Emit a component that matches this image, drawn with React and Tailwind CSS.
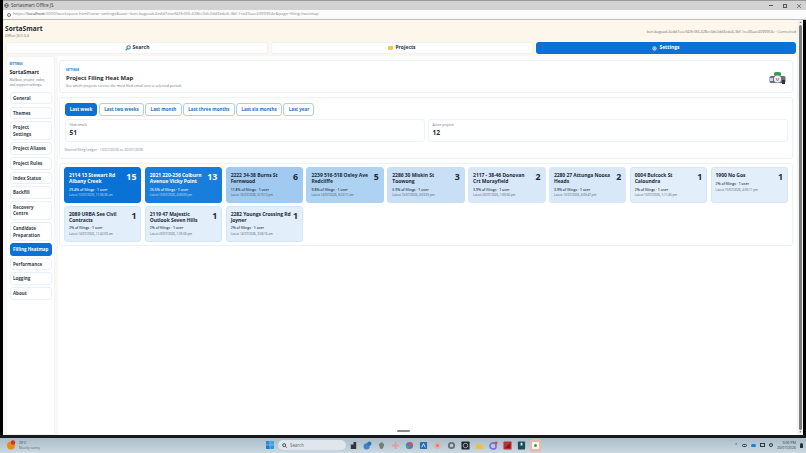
import React from "react";

const hi = "bg-[#0a72d4] text-white border-[#0a72d4]";
const low = "bg-[#e2eefa] text-[#1d2a38] border-[#d5e6f7]";
const cards = [
  ["2114 13 Stewart Rd\nAlbany Creek", 15, "29.4%", "15/07/2026, 11:36:36 am", hi],
  ["2021 220-236 Colburn\nAvenue Vicky Point", 13, "25.5%", "15/07/2026, 4:00:00 pm", "bg-[#197edb] text-white border-[#197edb]"],
  ["2222 34-38 Burns St\nFernwood", 6, "11.8%", "16/07/2026, 6:19:12 pm", "bg-[#a0caf0] text-[#1d2a38] border-[#a0caf0]"],
  ["2239 516-518 Oxley Ave\nRedcliffe", 5, "9.8%", "14/07/2026, 8:22:11 am", "bg-[#aed2f2] text-[#1d2a38] border-[#aed2f2]"],
  ["2286 30 Miskin St\nToowong", 3, "5.9%", "15/07/2026, 4:53:55 pm", "bg-[#c8dff5] text-[#1d2a38] border-[#c8dff5]"],
  ["2117 - 38-46 Donovan\nCrt Morayfield", 2, "3.9%", "20/07/2026, 1:00:06 pm", "bg-[#d8e8f8] text-[#1d2a38] border-[#d8e8f8]"],
  ["2280 27 Attunga Noosa\nHeads", 2, "3.9%", "15/07/2026, 4:05:47 pm", "bg-[#d8e8f8] text-[#1d2a38] border-[#d8e8f8]"],
  ["0004 Bulcock St\nCaloundra", 1, "2%", "15/07/2026, 1:11:45 pm", low],
  ["1900 No Gos", 1, "2%", "15/07/2026, 4:05:11 pm", low],
  ["2089 URBA See Civil\nContracts", 1, "2%", "14/07/2026, 11:42:59 am", low],
  ["2119 47 Majestic\nOutlook Seven Hills", 1, "2%", "20/07/2026, 1:35:06 pm", low],
  ["2282 Youngs Crossing Rd\nJoyner", 1, "2%", "14/07/2026, 9:34:16 am", low],
];

const nav = [
  "General",
  "Themes",
  "Project\nSettings",
  "Project Aliases",
  "Project Rules",
  "Index Status",
  "Backfill",
  "Recovery\nCentre",
  "Candidate\nPreparation",
  "Filling Heatmap",
  "Performance",
  "Logging",
  "About",
];

const ranges = ["Last week", "Last two weeks", "Last month", "Last three months", "Last six months", "Last year"];

function Mascot() {
  return (
    <svg width="17" height="14" viewBox="0 0 17 14">
      <rect x="0.5" y="5" width="16" height="7" rx="1.5" fill="#66747f" />
      <rect x="5" y="1" width="7" height="4" rx="1.5" fill="#3f9a5a" />
      <circle cx="8.5" cy="8" r="3.6" fill="#eef1f4" />
      <path d="M7 7l1.5 3L10 7" stroke="#c2455a" strokeWidth="0.8" fill="none" />
      <rect x="1" y="7" width="3" height="3" fill="#cfd8e0" />
      <rect x="13" y="9" width="3" height="4" fill="#2c3640" />
    </svg>
  );
}

function Tray({ children }) {
  return (
    <svg width="9" height="9" viewBox="0 0 10 10" className="shrink-0">
      {children}
    </svg>
  );
}

function Taskbar() {
  return (
    <div className="h-[15.5px] shrink-0 flex items-center bg-gradient-to-b from-[#a9bcc8] to-[#cbd9e1] text-[#2c3a44]">
      <div className="w-[258px] flex items-center pl-[6px] shrink-0">
        <svg width="10" height="10" viewBox="0 0 10 10">
          <circle cx="5" cy="5.5" r="4" fill="#ea8a1e" />
          <circle cx="7" cy="2.5" r="2.2" fill="#c8372c" />
        </svg>
        <div className="ml-[3px] leading-[5px]">
          <div className="text-[3.4px]">20°C</div>
          <div className="text-[3.4px] text-[#5a6a75]">Mostly sunny</div>
        </div>
      </div>
      <svg width="8" height="8" viewBox="0 0 8 8" className="ml-[8px] shrink-0">
        <rect width="3.7" height="3.7" fill="#1f8fe0" />
        <rect x="4.3" width="3.7" height="3.7" fill="#3aa5ec" />
        <rect y="4.3" width="3.7" height="3.7" fill="#1a7cd0" />
        <rect x="4.3" y="4.3" width="3.7" height="3.7" fill="#2c95e2" />
      </svg>
      <div className="ml-[4px] w-[68px] h-[10px] rounded-full bg-[#dfe7ec] flex items-center pl-[4px] gap-[3px] shrink-0">
        <svg width="5" height="5" viewBox="0 0 10 10" fill="none" stroke="#26323a" strokeWidth="1.6">
          <circle cx="4.2" cy="4.2" r="3" />
          <path d="M6.6 6.6L9.4 9.4" />
        </svg>
        <span className="text-[4.4px] text-[#59666f]">Search</span>
      </div>
      <div className="ml-[3px] flex items-center gap-[5px]">
        <Tray><path d="M2 9V4h3V1h3v8z" fill="#30363c" /></Tray>
        <Tray><circle cx="4" cy="6" r="3.4" fill="#3a86c4" /><circle cx="7" cy="3" r="2.4" fill="#2f6fb8" /></Tray>
        <Tray><path d="M5 1l3 2.5-1.5 5h-3L2 3.5z" fill="#6f7f78" /></Tray>
        <Tray><path d="M4 1h2v3h3v2H6v3H4V6H1V4h3z" fill="#e39aa2" /></Tray>
        <Tray><circle cx="5" cy="5" r="4" fill="#5f6fd0" /><path d="M5 1a4 4 0 0 1 4 4H5z" fill="#e0524a" /><path d="M1 5a4 4 0 0 0 4 4V5z" fill="#4aa860" /></Tray>
        <Tray><rect x="1" y="1" width="8" height="8" rx="1" fill="#2a6cb0" /><path d="M3 7l2-4 2 4" stroke="#dff" strokeWidth="0.9" fill="none" /></Tray>
        <Tray><circle cx="5" cy="5" r="3.6" fill="#e9aaa8" /><circle cx="5" cy="5" r="1.4" fill="#d9706c" /></Tray>
        <Tray><circle cx="5" cy="5" r="3" fill="none" stroke="#666e74" strokeWidth="2" /></Tray>
        <Tray><rect x="0.5" y="0.5" width="9" height="9" rx="1" fill="#23262a" /><circle cx="5" cy="5" r="2.5" fill="none" stroke="#cfd4d8" strokeWidth="0.8" /></Tray>
        <Tray><path d="M1 3h3l1 1h4v5H1z" fill="#e9c04e" /></Tray>
        <Tray><circle cx="4.5" cy="5.5" r="3.4" fill="none" stroke="#6f6fe0" strokeWidth="1.8" /><circle cx="7.8" cy="2.2" r="1.6" fill="#d64a55" /></Tray>
        <Tray><rect x="0.5" y="0.5" width="9" height="9" rx="1" fill="#c22e32" /><path d="M2 8l6-6v6z" fill="#7d1a1e" /></Tray>
        <Tray><rect x="1" y="0.5" width="8" height="9" rx="1" fill="#1f4a58" /><rect x="4" y="2" width="2" height="3" fill="#d9eef2" /></Tray>
        <div className="w-[11px] h-[13px] -ml-[1px] rounded-[2px] bg-[#e8b9ae] flex items-center justify-center">
          <div className="w-[7px] h-[7px] rounded-[1px] bg-[#f6f6f3] flex items-center justify-center">
            <div className="w-[3px] h-[3px] rounded-full bg-[#3d9a50]" />
          </div>
        </div>
      </div>
      <div className="ml-auto flex items-center gap-[4px] pr-[3px]">
        <span className="text-[5px] leading-none">⌃</span>
        <div className="w-[5px] h-[3px] rounded-full border-[0.5px] border-[#2c3a44]" />
        <div className="w-[5px] h-[3px] rounded-full bg-[#1a7fd8]" />
        <div className="w-[5px] h-[4px] border-[0.5px] border-[#2c3a44]" />
        <div className="w-[4px] h-[4px] rounded-full border-[0.5px] border-[#2c3a44]" />
        <div className="text-right text-[3.6px] leading-[5px]">
          <div>3:00 PM</div>
          <div>20/07/2026</div>
        </div>
        <div className="w-[3px] h-[5px] rounded-t-full bg-[#26323a]" />
      </div>
    </div>
  );
}

export default function App() {
  return (
    <div
      className="w-[806px] h-[453px] overflow-hidden flex flex-col bg-black"
      style={{ fontFamily: '"Open Sans", "Liberation Sans", sans-serif' }}
    >
      <div className="flex-1 min-h-0 flex flex-col border-l-[3px] border-black">
        <div className="h-[10px] shrink-0 bg-[#d2d2d2] border-t border-[#9a9a9a] flex items-center pl-[1px] pr-[5px]">
          <svg width="5" height="5" viewBox="0 0 10 10" fill="none" stroke="#444" strokeWidth="1">
            <circle cx="5" cy="5" r="4" />
            <path d="M1 5h8M5 1c-3 3-3 5 0 8M5 1c3 3 3 5 0 8" />
          </svg>
          <span className="ml-[2px] text-[4.6px] text-[#333]">Sortasmart Office JS</span>
          <div className="ml-auto flex items-center gap-[10px]">
            <div className="w-[4px] h-px bg-[#555]" />
            <div className="w-[4px] h-[4px] border-[0.7px] border-[#555]" />
            <svg width="4" height="4" viewBox="0 0 4 4" stroke="#555" strokeWidth="0.7">
              <path d="M0 0l4 4M4 0l-4 4" />
            </svg>
          </div>
        </div>
        <div className="h-[10px] shrink-0 bg-[#fbfbfb] border-b border-[#bdbdbd] flex items-center pl-[4px]">
          <div className="w-[4px] h-[4px] rounded-full border-[0.7px] border-[#777]" />
          <span className="ml-[2px] text-[4.2px] text-[#8a8a8a] whitespace-nowrap">
            https://<span className="text-[#333]">localhost</span>:5000/workspace.html?view=settings&user=ben.bagaud-4edd7eeef42fc0f4-428cc3dc2dd3eda6-3bf-1ce49aac4399954e&page=filing-heatmap
          </span>
        </div>
        <div className="flex-1 min-h-0 flex border-r-[3px] border-black">
          <div className="flex-1 min-w-0 flex flex-col bg-[#fdf6ea]">
            <div className="h-[22px] shrink-0 pl-[2px] pr-[1px] flex items-start justify-between">
              <div className="pt-[4px]">
                <div className="text-[6.6px] leading-[9px] font-bold text-[#1f2933]">SortaSmart</div>
                <div className="text-[3.8px] leading-[6px] text-[#6b7280]">Office JS 0.3.4</div>
              </div>
              <div className="pt-[9px] text-[3.7px] text-[#6b7280] whitespace-nowrap">
                ben.bagaud-4edd7eeef42fc0f4-428cc3dc2dd3eda6-3bf-1ce49aac4399954e · Connected
              </div>
            </div>
            <div className="h-[12px] shrink-0 flex gap-[3px] pl-[3px] pr-[1px]">
              <div className="flex-1 rounded-[3px] bg-white border border-[#eef2f6] flex items-center justify-center gap-[2px]">
                <svg width="6" height="6" viewBox="0 0 10 10" fill="none" stroke="#3f86b8" strokeWidth="1.8">
                  <circle cx="6" cy="4" r="2.8" />
                  <path d="M4 6L1 9" />
                </svg>
                <span className="text-[5px] font-bold text-[#2a3642]">Search</span>
              </div>
              <div className="flex-1 rounded-[3px] bg-white border border-[#eef2f6] flex items-center justify-center gap-[2px]">
                <div className="w-[5px] h-[4.5px] rounded-[1px] bg-[#ecc44f]" />
                <span className="text-[5px] font-bold text-[#2a3642]">Projects</span>
              </div>
              <div className="flex-1 rounded-[3px] bg-[#0a72d4] flex items-center justify-center gap-[2px]">
                <svg width="5" height="5" viewBox="0 0 10 10" fill="none" stroke="#fff" strokeWidth="1.6">
                  <circle cx="5" cy="5" r="3.4" />
                  <circle cx="5" cy="5" r="1" />
                </svg>
                <span className="text-[5px] font-bold text-white">Settings</span>
              </div>
            </div>
            <div className="flex-1 min-h-0 flex mt-[2px] pl-[3px] gap-[3px] bg-[#faf8f4]">
              <aside className="w-[49px] shrink-0 bg-white border border-[#f1f3f5] rounded-t-[3px] px-[2.5px] pt-[4.5px]">
                <div className="text-[2.8px] leading-[5px] font-bold text-[#0a72d4] uppercase">Settings</div>
                <div className="mt-[1px] text-[5.2px] leading-[8px] font-bold text-[#1f2933]">SortaSmart</div>
                <div className="mt-[1.5px] text-[3.3px] leading-[5px] text-[#6b7280]">Mailbox, project, index, and support settings.</div>
                <div className="mt-[5px] flex flex-col gap-[2.15px]">
                  {nav.map((n) => (
                    <div
                      key={n}
                      className={`rounded-[3px] border px-[2.5px] py-[1.95px] text-[4.5px] leading-[6.6px] font-bold whitespace-pre ${
                        n === "Filling Heatmap"
                          ? "bg-[#0a72d4] border-[#0a72d4] text-white"
                          : "bg-white border-[#e9f0f7] text-[#333f4b]"
                      }`}
                    >
                      {n}
                    </div>
                  ))}
                </div>
              </aside>
              <main className="flex-1 min-w-0 bg-white pt-[4.3px] pl-[1px] pr-[4px] flex flex-col">
                <div className="h-[32.5px] shrink-0 rounded-[3px] border border-[#e9f2fa] px-[6px] pt-[7px] flex justify-between">
                  <div>
                    <div className="text-[2.8px] leading-[4px] font-bold text-[#0a72d4] uppercase">Settings</div>
                    <div className="mt-[2px] text-[5.8px] leading-[8px] font-bold text-[#1f2933]">Project Filing Heat Map</div>
                    <div className="mt-[1px] text-[3.55px] leading-[5px] text-[#6b7280]">See which projects receive the most filed email over a selected period.</div>
                  </div>
                  <div className="pt-[3px]">
                    <Mascot />
                  </div>
                </div>
                <div className="mt-[4px] h-[62.5px] shrink-0 rounded-[3px] border border-[#e9f2fa] px-[4.5px] pt-[5.5px]">
                  <div className="flex gap-[1.5px]">
                    {ranges.map((r, i) => (
                      <div
                        key={r}
                        className={`h-[12.5px] rounded-[3px] border px-[4.2px] flex items-center text-[4.5px] font-bold ${
                          i === 0
                            ? "bg-[#0a72d4] border-[#0a72d4] text-white"
                            : "bg-white border-[#a9d0f2] text-[#1f72bd]"
                        }`}
                      >
                        {r}
                      </div>
                    ))}
                  </div>
                  <div className="mt-[3.5px] flex gap-[3px]">
                    <div className="flex-1 h-[23px] rounded-[3px] border border-[#eef3f7] px-[4px] pt-[3px]">
                      <div className="text-[3.2px] leading-[5px] text-[#6b7280]">Filed emails</div>
                      <div className="text-[6.6px] leading-[9px] font-bold text-[#1f2933]">51</div>
                    </div>
                    <div className="flex-1 h-[23px] rounded-[3px] border border-[#eef3f7] px-[4px] pt-[3px]">
                      <div className="text-[3.2px] leading-[5px] text-[#6b7280]">Active projects</div>
                      <div className="text-[6.6px] leading-[9px] font-bold text-[#1f2933]">12</div>
                    </div>
                  </div>
                  <div className="mt-[4.5px] text-[3.6px] leading-[5px] text-[#7b8794]">Shared filing ledger · 13/07/2026 to 20/07/2026</div>
                </div>
                <div className="mt-[3.5px] rounded-[3px] border border-[#e9f2fa] px-[4px] pt-[3.6px] pb-[3.3px] grid grid-cols-9 gap-[3.4px]">
                  {cards.map(([t, n, p, d, c]) => (
                    <div key={t} className={`h-[35.4px] rounded-[3px] border px-[4px] pt-[3.5px] ${c}`}>
                      <div className="flex justify-between items-start">
                        <div className="text-[5px] leading-[6.6px] font-bold whitespace-pre tracking-[-0.05px]">{t}</div>
                        <div className="text-[8.8px] leading-[10px] font-bold">{n}</div>
                      </div>
                      <div className={`${t.includes("\n") ? "mt-[1.5px]" : "-mt-[0.5px]"} text-[3.5px] leading-[5px] font-semibold opacity-90`}>{p} of filings · 1 user</div>
                      <div className="mt-[1.5px] text-[3px] leading-[5px] opacity-75">Latest {d}</div>
                    </div>
                  ))}
                </div>
              </main>
            </div>
          </div>
          <div className="w-[6px] shrink-0 bg-[#f3f3f3] flex flex-col items-center pl-[1px]">
            <div className="text-[3px] leading-[5px] text-[#666]">▲</div>
            <div className="w-[3.5px] flex-1 bg-[#7d7d7d] rounded-full" />
            <div className="text-[3px] leading-[5px] text-[#666]">▼</div>
          </div>
        </div>
      </div>
      <div className="h-[2.5px] shrink-0 bg-[#17191b] relative flex justify-center">
        <div className="absolute -top-[5px] w-[13px] h-[2px] rounded-full bg-[#8a8a8a]" />
      </div>
      <Taskbar />
    </div>
  );
}
